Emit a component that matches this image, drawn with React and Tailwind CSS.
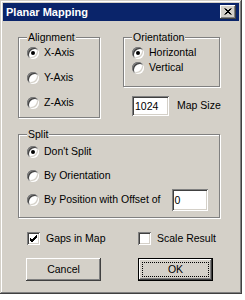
import React from 'react'

const raised =
  'shadow-[inset_-1px_-1px_0_#404040,inset_1px_1px_0_#ffffff,inset_-2px_-2px_0_#808080,inset_2px_2px_0_#d4d0c8]'
const sunken =
  'shadow-[inset_1px_1px_0_#808080,inset_-1px_-1px_0_#ffffff,inset_2px_2px_0_#404040,inset_-2px_-2px_0_#d4d0c8]'

function Radio({ checked }) {
  return (
    <span className={`relative w-[12px] h-[12px] shrink-0 rounded-full bg-white ${sunken}`}>
      {checked && <span className="absolute left-[4px] top-[4px] w-[4px] h-[4px] rounded-full bg-black" />}
    </span>
  )
}

function Check({ checked }) {
  return (
    <span className={`relative w-[13px] h-[13px] shrink-0 bg-white ${sunken}`}>
      {checked && (
        <svg className="absolute left-0 top-0" width="13" height="13" viewBox="0 0 13 13">
          <path d="M3 6 L5 8 L10 3 M3 7 L5 9 L10 4 M3 8 L5 10 L10 5" stroke="#000" strokeWidth="1" fill="none" />
        </svg>
      )}
    </span>
  )
}

function Group({ label, className, children }) {
  return (
    <div className={`relative border border-[#808080] shadow-[inset_1px_1px_0_#ffffff,1px_1px_0_#ffffff] ${className}`}>
      <span className="absolute left-[8px] top-[-8px] px-[1px] bg-[#d4d0c8] leading-[14px]">{label}</span>
      {children}
    </div>
  )
}

function Field({ value, className }) {
  return (
    <div className={`bg-white pl-[3px] flex items-center leading-none ${sunken} ${className}`}>{value}</div>
  )
}

export default function App() {
  return (
    <div className="w-[245px] h-[300px] bg-white font-['Liberation_Sans',Arial,sans-serif] text-[10.5px] text-black">
      <div className="w-[242px] h-[294px] bg-[#d4d0c8] p-[3px] flex flex-col shadow-[inset_-1px_-1px_0_#404040,inset_1px_1px_0_#d4d0c8,inset_-2px_-2px_0_#808080,inset_2px_2px_0_#ffffff]">
        {/* title bar */}
        <div className="h-[18px] bg-[#0a246a] flex items-center justify-between pl-[3px] pr-[3px]">
          <span className="text-white font-bold text-[11px] leading-none">Planar Mapping</span>
          <span className={`w-[16px] h-[14px] bg-[#d4d0c8] ${raised} flex items-center justify-center`}>
            <svg width="16" height="14" viewBox="0 0 16 14">
              <path d="M4.5 3.5 L10.5 9.5 M10.5 3.5 L4.5 9.5 M5.5 3.5 L11.5 9.5 M11.5 3.5 L5.5 9.5" stroke="#000" strokeWidth="1" />
            </svg>
          </span>
        </div>

        <div className="flex flex-col pl-[15px]">
          <div className="flex gap-[23px] mt-[16px]">
            <Group label="Alignment" className="w-[82px] h-[81px] flex flex-col pt-[7px] pl-[8px] gap-[9px]">
              {['X-Axis', 'Y-Axis', 'Z-Axis'].map((t, i) => (
                <div key={t} className="h-[16px] flex items-center gap-[5px]">
                  <Radio checked={i === 0} />
                  <span>{t}</span>
                </div>
              ))}
            </Group>

            <div className="flex flex-col">
              <Group label="Orientation" className="w-[97px] h-[50px] flex flex-col pt-[7px] pl-[8px]">
                {['Horizontal', 'Vertical'].map((t, i) => (
                  <div key={t} className="h-[15px] flex items-center gap-[5px]">
                    <Radio checked={i === 0} />
                    <span>{t}</span>
                  </div>
                ))}
              </Group>
              <div className="flex items-center mt-[9px] ml-[9px] gap-[8px]">
                <Field value="1024" className="w-[37px] h-[20px]" />
                <span>Map Size</span>
              </div>
            </div>
          </div>

          <Group label="Split" className="mt-[16px] w-[202px] h-[84px] flex flex-col pt-[9px] pl-[8px] gap-[8px]">
            <div className="h-[16px] flex items-center gap-[5px]">
              <Radio checked />
              <span>Don't Split</span>
            </div>
            <div className="h-[16px] flex items-center gap-[5px]">
              <Radio />
              <span>By Orientation</span>
            </div>
            <div className="h-[16px] flex items-center gap-[5px]">
              <Radio />
              <span>By Position with Offset of</span>
              <Field value="0" className="ml-[6px] w-[36px] h-[22px] shrink-0" />
            </div>
          </Group>

          <div className="flex items-center mt-[14px] h-[13px]">
            <div className="w-[120px] pl-[9px] flex items-center gap-[6px]">
              <Check checked />
              <span>Gaps in Map</span>
            </div>
            <div className="flex items-center gap-[6px]">
              <Check />
              <span>Scale Result</span>
            </div>
          </div>

          <div className="flex mt-[13px] pl-[8px] gap-[37px]">
            <button className={`w-[75px] h-[23px] bg-[#d4d0c8] ${raised} flex items-center justify-center`}>Cancel</button>
            <button className="w-[75px] h-[23px] border border-black bg-[#d4d0c8] flex">
              <span className={`relative flex-1 flex items-center justify-center ${raised}`}>
                <span className="absolute left-[3px] top-[3px] right-[3px] bottom-[3px] border border-dotted border-black" />
                OK
              </span>
            </button>
          </div>
        </div>
      </div>
    </div>
  )
}
